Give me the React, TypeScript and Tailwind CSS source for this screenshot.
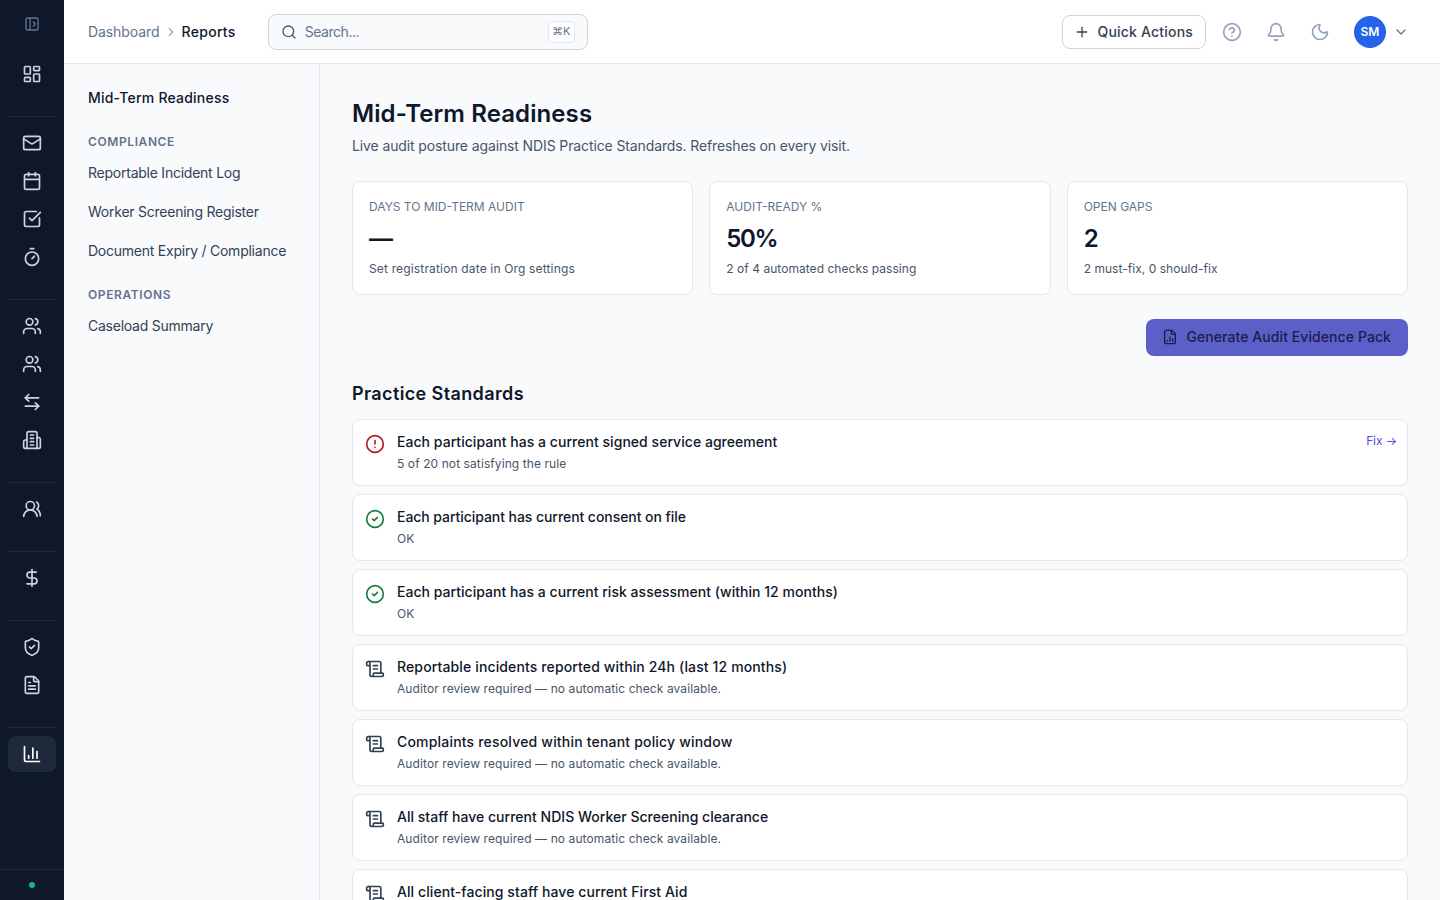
import React from "react";
import { PanelLeftOpen, LayoutDashboard, Mail, Calendar, SquareCheckBig, Timer, Users, ArrowLeftRight, UsersRound, DollarSign, ShieldCheck, FileText, ChartColumn, Search, ChevronRight, ChevronDown, Plus, CircleHelp, Bell, Moon, FileChartColumn, CircleAlert, CircleCheck, ScrollText } from "lucide-react";

function BuildingIcon({ className }: { className?: string }) {
  return (
    <svg viewBox="0 0 24 24" fill="none" stroke="currentColor" strokeWidth={2} strokeLinecap="round" strokeLinejoin="round" className={className}>
      <path d="M6 22V4a2 2 0 0 1 2-2h8a2 2 0 0 1 2 2v18Z" />
      <path d="M6 12H4a2 2 0 0 0-2 2v6a2 2 0 0 0 2 2h2" />
      <path d="M18 9h2a2 2 0 0 1 2 2v9a2 2 0 0 1-2 2h-2" />
      <path d="M10 6h4" /><path d="M10 10h4" /><path d="M10 14h4" /><path d="M10 18h4" />
    </svg>
  );
}

const ic = "w-5 h-5";
function RailItem({ children, active }: { children: React.ReactNode; active?: boolean }) {
  return (
    <div className={`h-9 w-12 rounded-lg flex items-center justify-center ${active ? "bg-[#1e293b] text-white" : "text-[#cbd5e1]"}`}>
      {children}
    </div>
  );
}
function RailGroup({ children }: { children: React.ReactNode }) {
  return <div className="flex flex-col gap-0.5">{children}</div>;
}
function RailSep() {
  return <div className="h-px w-12 bg-[#1e293b] mt-6 mb-2" />;
}

function Rail() {
  return (
    <aside className="w-16 shrink-0 bg-[#0f172a] flex flex-col items-center h-[900px]">
      <div className="h-12 w-full flex items-center justify-center text-[#64748b]">
        <PanelLeftOpen className="w-4 h-4" />
      </div>
      <div className="pt-2 flex flex-col items-center flex-1">
        <RailGroup>
          <RailItem><LayoutDashboard className={ic} /></RailItem>
        </RailGroup>
        <RailSep />
        <RailGroup>
          <RailItem><Mail className={ic} /></RailItem>
          <RailItem><Calendar className={ic} /></RailItem>
          <RailItem><SquareCheckBig className={ic} /></RailItem>
          <RailItem><Timer className={ic} /></RailItem>
        </RailGroup>
        <RailSep />
        <RailGroup>
          <RailItem><Users className={ic} /></RailItem>
          <RailItem><Users className={ic} /></RailItem>
          <RailItem><ArrowLeftRight className={ic} /></RailItem>
          <RailItem><BuildingIcon className={ic} /></RailItem>
        </RailGroup>
        <RailSep />
        <RailGroup>
          <RailItem><UsersRound className={ic} /></RailItem>
        </RailGroup>
        <RailSep />
        <RailGroup>
          <RailItem><DollarSign className={ic} /></RailItem>
        </RailGroup>
        <RailSep />
        <RailGroup>
          <RailItem><ShieldCheck className={ic} /></RailItem>
          <RailItem><FileText className={ic} /></RailItem>
        </RailGroup>
        <RailSep />
        <RailGroup>
          <RailItem active><ChartColumn className={ic} /></RailItem>
        </RailGroup>
      </div>
      <div className="h-[31px] w-full border-t border-[#1e293b] flex items-center justify-center">
        <div className="w-1.5 h-1.5 rounded-full bg-[#10b981]" />
      </div>
    </aside>
  );
}

function TopBar() {
  return (
    <header className="h-16 bg-white border-b border-[#e2e8f0] flex items-center pl-6 pr-[31px] shrink-0">
      <div className="flex items-center text-sm">
        <span className="text-[#64748b] tracking-[-0.08px]">Dashboard</span>
        <ChevronRight className="w-3.5 h-3.5 ml-[4px] mr-[4px] text-[#94a3b8]" />
        <span className="text-[#0f172a] font-medium tracking-[0.3px]">Reports</span>
      </div>
      <div className="ml-8 w-80 h-9 rounded-lg border border-[#cbd5e1] bg-[#f8fafc] flex items-center pl-3 pr-3 text-sm text-[#64748b]">
        <Search className="w-4 h-4 text-[#475569]" />
        <span className="ml-2 tracking-[-0.45px]">Search...</span>
        <span className="ml-auto h-[22px] w-[27px] justify-center rounded border border-[#e2e8f0] bg-white text-[11px] flex items-center text-[#64748b]">⌘K</span>
      </div>
      <div className="ml-auto flex items-center">
        <button className="h-[34px] pl-[11px] pr-3 rounded-lg border border-[#cbd5e1] bg-white flex items-center gap-[7px] text-sm font-medium text-[#334155] tracking-[0.2px]">
          <Plus className="w-4 h-4" />
          Quick Actions
        </button>
        <div className="ml-1 w-11 flex justify-center text-[#94a3b8]"><CircleHelp className="w-5 h-5" /></div>
        <div className="w-11 flex justify-center text-[#94a3b8]"><Bell className="w-5 h-5" /></div>
        <div className="w-11 flex justify-center text-[#94a3b8]"><Moon className="w-5 h-5" /></div>
        <div className="ml-3 w-8 h-8 rounded-full bg-[#2563eb] text-white text-xs font-semibold flex items-center justify-center">SM</div>
        <ChevronDown className="ml-[7px] w-4 h-4 text-[#64748b]" />
      </div>
    </header>
  );
}

function SubNav() {
  const link = "h-[39px] flex items-center text-sm text-[#334155] tracking-[-0.24px]";
  const head = "text-xs font-semibold tracking-wider text-[#64748b]";
  return (
    <nav className="w-64 shrink-0 border-r border-[#e2e8f0] pl-6 pt-[14px]">
      <div className="h-10 flex items-center text-sm font-medium text-[#0f172a] tracking-[0.22px]">Mid-Term Readiness</div>
      <div className={`${head} mt-4 mb-[3px] h-4 leading-4`}>COMPLIANCE</div>
      <div className={link}>Reportable Incident Log</div>
      <div className={link}>Worker Screening Register</div>
      <div className={link}>Document Expiry / Compliance</div>
      <div className={`${head} mt-[17px] mb-[3px] h-4 leading-4`}>OPERATIONS</div>
      <div className={link}>Caseload Summary</div>
    </nav>
  );
}

function Stat({ label, value, note, wide }: { label: string; value: string; note: string; wide?: boolean }) {
  return (
    <div className="flex-1 h-[114px] rounded-lg border border-[#e2e8f0] bg-white px-4 pt-[17px]">
      <div className="text-xs leading-4 text-[#64748b]">{label}</div>
      <div className="mt-2 text-2xl leading-8 font-semibold text-[#0f172a] tracking-[-1.4px]">{value}</div>
      <div className={`mt-1.5 text-xs leading-4 text-[#475569] ${wide ? "tracking-[0.16px]" : "tracking-[0.04px]"}`}>{note}</div>
    </div>
  );
}

function Check({ icon, title, note, fix, tracking }: { icon: "alert" | "ok" | "scroll"; title: string; note: string; fix?: boolean; tracking: string }) {
  return (
    <div className="h-[67px] shrink-0 rounded-lg border border-[#e2e8f0] bg-white flex pl-3 pr-[10px] pt-3">
      <div className="w-5 mr-3 pt-0.5">
        {icon === "alert" && <CircleAlert className="w-5 h-5 text-[#b91c1c]" />}
        {icon === "ok" && <CircleCheck className="w-5 h-5 text-[#15803d]" />}
        {icon === "scroll" && <ScrollText className="w-5 h-5 text-[#334155]" />}
      </div>
      <div className="flex-1">
        <div className={`text-sm leading-5 font-medium text-[#0f172a] ${tracking}`}>{title}</div>
        <div className="mt-1 text-xs leading-4 text-[#475569] tracking-[0.09px]">{note}</div>
      </div>
      {fix && <div className="text-xs leading-4 text-[#4f46e5] pt-px tracking-[-0.1px]">Fix →</div>}
    </div>
  );
}

const AUDITOR = "Auditor review required — no automatic check available.";

function Main() {
  return (
    <main className="flex-1 px-8 pt-8 overflow-hidden">
      <h1 className="text-2xl leading-8 font-semibold text-[#0f172a] mt-0.5 tracking-[0.1px]">Mid-Term Readiness</h1>
      <p className="mt-1.5 text-sm leading-5 text-[#475569] tracking-[-0.12px]">Live audit posture against NDIS Practice Standards. Refreshes on every visit.</p>
      <div className="mt-[25px] flex gap-4">
        <Stat label="DAYS TO MID-TERM AUDIT" value="—" note="Set registration date in Org settings" wide />
        <Stat label="AUDIT-READY %" value="50%" note="2 of 4 automated checks passing" />
        <Stat label="OPEN GAPS" value="2" note="2 must-fix, 0 should-fix" />
      </div>
      <div className="mt-6 flex justify-end">
        <button className="h-[37px] pl-4 pr-[17px] pb-px rounded-lg bg-[#5b5fc7] flex items-center gap-2 text-sm font-medium text-[#1e1b4b] tracking-[0.08px]">
          <FileChartColumn className="w-4 h-4" />
          Generate Audit Evidence Pack
        </button>
      </div>
      <h2 className="mt-6 text-lg leading-7 font-semibold text-[#0f172a] tracking-[0.38px]">Practice Standards</h2>
      <div className="mt-[11px] flex flex-col gap-2">
        <Check tracking="tracking-[0.04px]" icon="alert" title="Each participant has a current signed service agreement" note="5 of 20 not satisfying the rule" fix />
        <Check tracking="tracking-[-0.06px]" icon="ok" title="Each participant has current consent on file" note="OK" />
        <Check tracking="tracking-[0.03px]" icon="ok" title="Each participant has a current risk assessment (within 12 months)" note="OK" />
        <Check tracking="tracking-[0.13px]" icon="scroll" title="Reportable incidents reported within 24h (last 12 months)" note={AUDITOR} />
        <Check tracking="tracking-[0.19px]" icon="scroll" title="Complaints resolved within tenant policy window" note={AUDITOR} />
        <Check tracking="tracking-[0.02px]" icon="scroll" title="All staff have current NDIS Worker Screening clearance" note={AUDITOR} />
        <Check tracking="tracking-[0.08px]" icon="scroll" title="All client-facing staff have current First Aid" note={AUDITOR} />
      </div>
    </main>
  );
}

export default function App() {
  return (
    <div className="flex h-[900px] w-[1440px] overflow-hidden bg-[#f8fafc] font-['Inter',sans-serif]">
      <Rail />
      <div className="flex-1 flex flex-col min-w-0">
        <TopBar />
        <div className="flex flex-1 min-h-0">
          <SubNav />
          <Main />
        </div>
      </div>
    </div>
  );
}
